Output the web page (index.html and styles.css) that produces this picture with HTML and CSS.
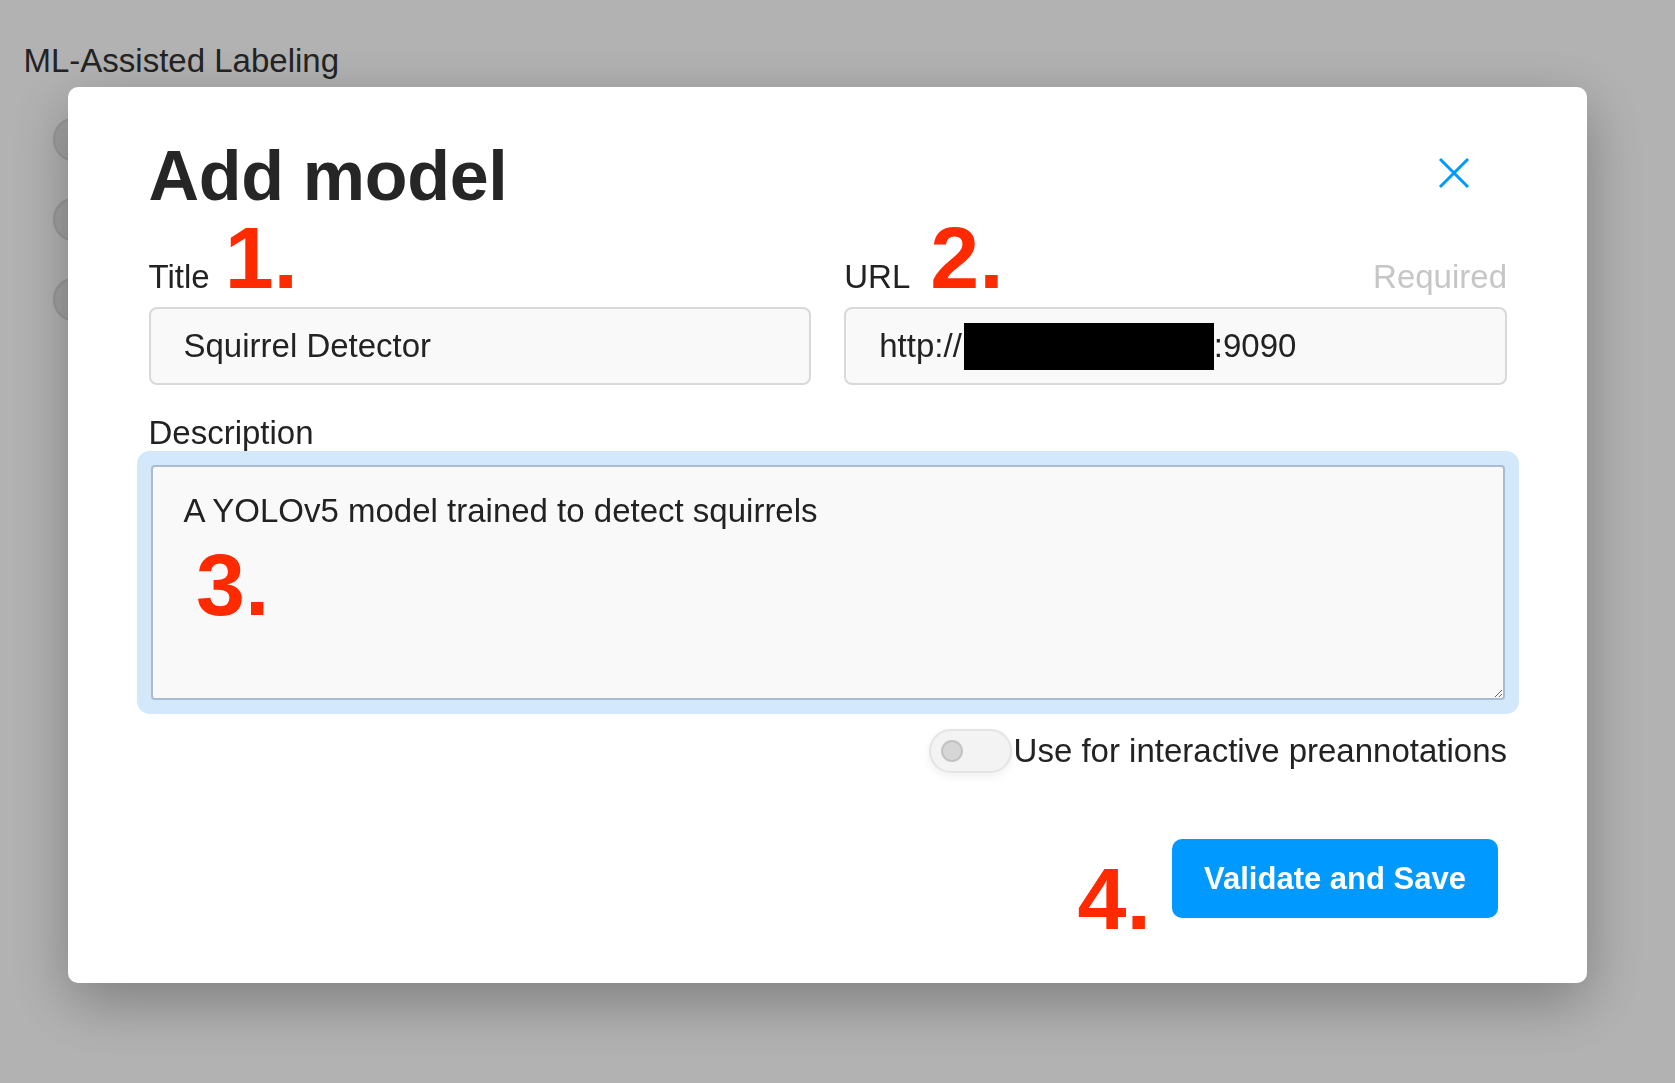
FILE: index.html
```html
<!DOCTYPE html>
<html lang="en">
<head>
  <meta charset="UTF-8" />
  <meta name="viewport" content="width=device-width, initial-scale=1.0" />
  <title>ML-Assisted Labeling</title>
  <link rel="stylesheet" href="styles.css">
</head>
<body>
  <div class="page">
    <div class="page-title">ML-Assisted Labeling</div>
    <div class="settings">
      <div class="setting"><span class="dot"></span></div>
      <div class="setting"><span class="dot"></span></div>
      <div class="setting"><span class="dot"></span></div>
    </div>
  </div>

  <div class="overlay">
    <div class="modal">
      <div class="modal-header">
        <h1>Add model</h1>
        <button class="close" aria-label="Close">
          <svg width="32" height="32" viewBox="0 0 32 32"><path d="M2 2 L30 30 M30 2 L2 30" stroke="#0099ff" stroke-width="3" fill="none" /></svg>
        </button>
      </div>

      <div class="row">
        <div class="field">
          <div class="label">Title<span class="step">1.</span></div>
          <input class="input" type="text" value="Squirrel Detector" />
        </div>
        <div class="field">
          <div class="label">URL<span class="step step-2">2.</span><span class="hint">Required</span></div>
          <div class="input">http://<span class="redact"></span>:9090</div>
        </div>
      </div>

      <div class="field field-desc">
        <div class="label">Description</div>
        <div class="textarea-wrap">
          <textarea class="textarea">A YOLOv5 model trained to detect squirrels</textarea>
          <span class="step step-3">3.</span>
        </div>
      </div>

      <div class="toggle-row">
        <span class="toggle"><span class="knob"></span></span>
        <span>Use for interactive preannotations</span>
      </div>

      <div class="footer">
        <span class="step step-4">4.</span>
        <button class="btn-primary">Validate and Save</button>
      </div>
    </div>
  </div>
</body>
</html>
```

FILE: styles.css
```css
body {
  margin: 0;
  font-family: 'Liberation Sans', Arial, sans-serif;
  background-color: #fff;
  color: #222;
}
.page {
  padding: 41px 0 0 23.5px;
}
.page-title {
  font-size: 33px;
  line-height: 40px;
  color: #333;
}
.settings {
  margin-top: 18px;
  padding-left: 29.5px;
}
.setting {
  height: 80px;
  display: flex;
  align-items: center;
}
.dot {
  width: 45px;
  height: 45px;
  box-sizing: border-box;
  border-radius: 50%;
  background: #e8e8e8;
  border: 2px solid #dadada;
}
.overlay {
  position: fixed;
  inset: 0;
  background: rgba(0,0,0,0.3);
  padding: 87px 0 0 68px;
}
.modal {
  width: 1519px;
  box-sizing: border-box;
  background: #fff;
  border-radius: 10px;
  padding: 54px 80px 39.5px 80.5px;
  box-shadow: 0 18px 60px rgba(0,0,0,0.3);
}
.modal-header {
  display: flex;
  justify-content: space-between;
  align-items: flex-start;
}
.modal-header h1 {
  margin: 0;
  font-size: 70px;
  line-height: 70px;
  font-weight: bold;
  color: #262626;
  letter-spacing: -0.3px;
}
.close {
  margin: 16px 37px 0 0;
  padding: 0;
  width: 32px;
  height: 32px;
  border: none;
  background: none;
}
.close svg {
  display: block;
}
.row {
  display: grid;
  grid-template-columns: 1fr 1fr;
  gap: 33px;
  margin-top: 3px;
}
.label {
  display: flex;
  align-items: baseline;
  font-size: 33px;
  line-height: 40px;
  color: #222;
  margin-bottom: 5px;
}
.step {
  font-size: 88px;
  line-height: 88px;
  font-weight: bold;
  color: #ff2a00;
  margin-left: 15px;
}
.step-2 {
  margin-left: 20px;
}
.hint {
  margin-left: auto;
  color: #c6c6c6;
}
.input {
  display: flex;
  align-items: center;
  width: 100%;
  height: 78px;
  box-sizing: border-box;
  border: 2px solid #d9d9d9;
  border-radius: 8px;
  background: #f9f9f9;
  padding: 0 33px;
  font-family: inherit;
  font-size: 33px;
  color: #222;
  outline: none;
}
.redact {
  display: inline-block;
  width: 250px;
  height: 47px;
  background: #000;
  margin-left: 2px;
}
.field-desc {
  margin-top: 27.5px;
}
.field-desc .label {
  margin-bottom: 12.7px;
}
.textarea-wrap {
  position: relative;
}
.textarea {
  display: block;
  margin: 0 2px;
  width: calc(100% - 4px);
  height: 235px;
  box-sizing: border-box;
  padding: 24px 31px;
  border: 2px solid #a9bcd2;
  border-radius: 4px;
  background: #f9f9f9;
  box-shadow: 0 0 0 14px #d4e8fc;
  font-family: inherit;
  font-size: 33px;
  line-height: 40px;
  color: #222;
  outline: none;
}
.step-3 {
  position: absolute;
  left: 47.5px;
  top: 76px;
  margin: 0;
}
.toggle-row {
  display: flex;
  justify-content: flex-end;
  align-items: center;
  gap: 2px;
  margin-top: 28.5px;
  font-size: 33px;
  line-height: 44px;
  color: #222;
}
.toggle {
  display: flex;
  align-items: center;
  width: 83px;
  height: 44px;
  box-sizing: border-box;
  border: 2px solid #e4e4e4;
  border-radius: 22px;
  background: #f3f3f3;
  padding-left: 10px;
  box-shadow: 0 4px 10px rgba(0,0,0,0.06);
}
.knob {
  width: 22px;
  height: 22px;
  box-sizing: border-box;
  border-radius: 50%;
  background: #d6d6d6;
  border: 2px solid #c2c2c2;
}
.footer {
  display: flex;
  justify-content: flex-end;
  align-items: flex-start;
  margin-top: 66.5px;
  padding-right: 9px;
}
.step-4 {
  margin: 16px 21px 0 0;
}
.btn-primary {
  width: 326px;
  height: 79px;
  border: none;
  border-radius: 10px;
  background: #0099ff;
  color: #fff;
  font-family: inherit;
  font-size: 31px;
  font-weight: bold;
}
```
